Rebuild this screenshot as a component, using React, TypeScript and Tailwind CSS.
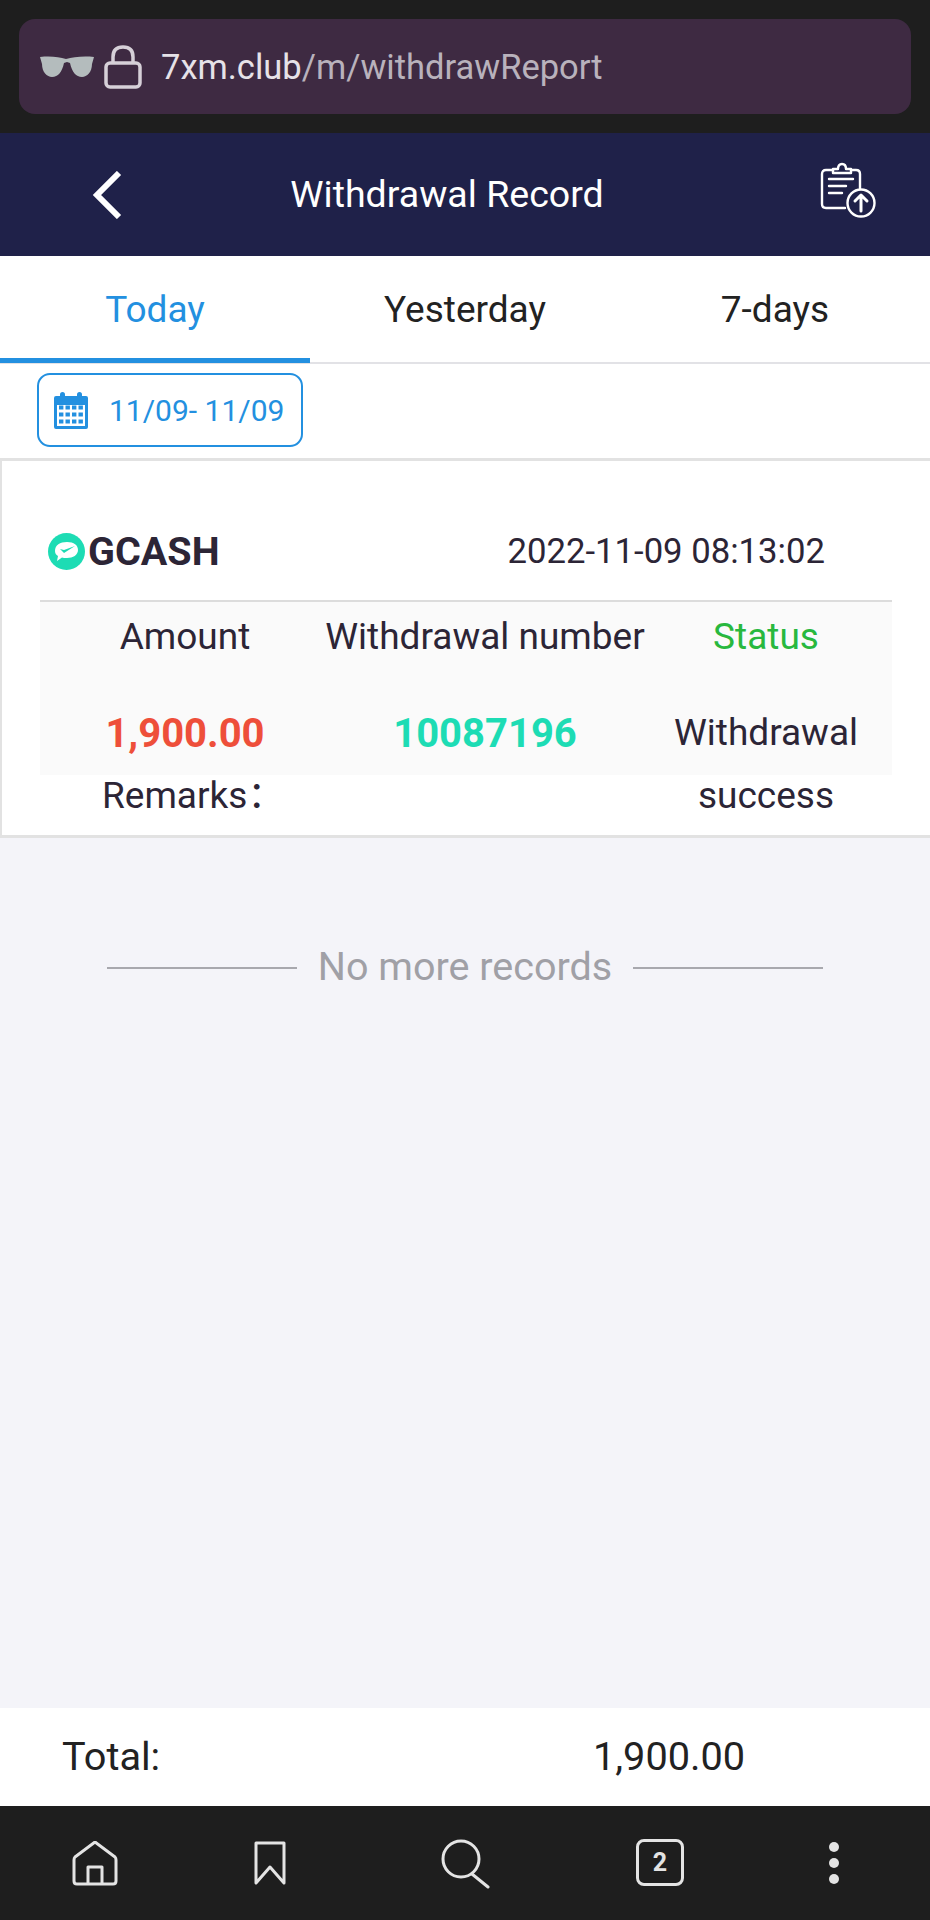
const TABS = ['Today', 'Yesterday', '7-days'];

function Glasses() {
  return (
    <svg width="56" height="24" viewBox="0 0 56 24" fill="#b4bcbd">
      <path d="M1 2 C12 1 20 2 27 4 C34 2 44 1 55 2 L53 9 C53 17 48 22 43 22 C37 22 33 17 31 8 L28 7 L25 8 C23 17 19 22 13 22 C8 22 3 17 3 9 Z" />
    </svg>
  );
}

function Lock() {
  return (
    <svg width="38" height="44" viewBox="0 0 38 44" fill="none" stroke="#d6d0d8" strokeWidth="3.5">
      <path d="M9 18 V12 C9 5 13 2 19 2 C25 2 29 5 29 12 V18" />
      <rect x="2" y="18" width="34" height="24" rx="4" />
    </svg>
  );
}

function ClipboardUpload() {
  return (
    <svg width="56" height="56" viewBox="0 0 56 56" fill="none" stroke="white" strokeWidth="2.4" strokeLinecap="round" strokeLinejoin="round">
      <path d="M13 8 H6 Q2 8 2 12 V42 Q2 46 6 46 H25" />
      <path d="M31 8 H36 Q40 8 40 12 V26" />
      <path d="M13 11 V7 H18 Q18 2 22 2 Q26 2 26 7 H31 V11 Z" />
      <path d="M9 17 H33 M9 24 H26 M9 31 H22" />
      <circle cx="41" cy="41" r="13.5" />
      <path d="M41 49 V34 M35 39 L41 33 L47 39" strokeWidth="3" />
    </svg>
  );
}

function CalendarIcon() {
  return (
    <svg width="36" height="38" viewBox="0 0 36 38" fill="#2390e0">
      <path d="M3 5 H8 V8 H12 V5 H24 V8 H28 V5 H33 Q35 5 35 7 V36 Q35 38 33 38 H3 Q1 38 1 36 V7 Q1 5 3 5 Z" />
      <rect x="7" y="1" width="5" height="9" rx="2.5" />
      <rect x="24" y="1" width="5" height="9" rx="2.5" />
      <rect x="4" y="14" width="28" height="21" fill="white" />
      {[16, 23, 30].map((y) =>
        [8, 14.5, 21, 27.5].map((x) => <rect key={`${x}-${y}`} x={x - 2} y={y - 1.5} width="4.4" height="4" fill="#2390e0" />),
      )}
    </svg>
  );
}

function GcashIcon() {
  return (
    <svg width="37" height="37" viewBox="0 0 37 37">
      <circle cx="18.5" cy="18.5" r="18.5" fill="#1ddcb4" />
      <path d="M7 18 C7 12 12 9 19 9 C26 9 30 12 30 17 C30 22 25 25 19 25 C17 25 15 25 14 24.5 L9 28 L10 23 C8 22 7 20 7 18 Z" fill="white" />
      <path d="M12 16 L16 20 L27 13 L16 17 Z" fill="#1ddcb4" />
    </svg>
  );
}

function BottomBar() {
  return (
    <div className="h-[114px] bg-[#1e1e1e] flex items-start pt-[35px] text-[#e4e4e4]">
      <div className="w-[190px] flex justify-center">
        <svg width="46" height="46" viewBox="0 0 46 46" fill="none" stroke="currentColor" strokeWidth="3" strokeLinejoin="round">
          <path d="M3 17 L23 2 L43 17 Q44 18 44 20 V41 Q44 44 41 44 H5 Q2 44 2 41 V20 Q2 18 3 17 Z" transform="translate(0 -1)" />
          <path d="M16 43 V26 H30 V43" />
        </svg>
      </div>
      <div className="w-[160px] flex justify-center">
        <svg width="32" height="44" viewBox="0 0 32 44" fill="none" stroke="currentColor" strokeWidth="3" strokeLinejoin="round">
          <path d="M2 2 H30 V42 L16 26 L2 42 Z" />
        </svg>
      </div>
      <div className="w-[232px] flex justify-center">
        <svg width="50" height="50" viewBox="0 0 50 50" fill="none" stroke="currentColor" strokeWidth="3" strokeLinecap="round" className="-mt-[2px]">
          <circle cx="20" cy="20" r="18" />
          <path d="M31 35 L47 48" />
        </svg>
      </div>
      <div className="w-[156px] flex justify-center">
        <div className="w-[48px] h-[47px] border-[3px] border-[#e4e4e4] rounded-[8px] flex items-center justify-center font-bold text-[25px] leading-none -mt-[2px]">2</div>
      </div>
      <div className="flex-1 flex flex-col items-center gap-[6px] pt-[1px]">
        <div className="w-[10px] h-[10px] rounded-full bg-[#e4e4e4]" />
        <div className="w-[10px] h-[10px] rounded-full bg-[#e4e4e4]" />
        <div className="w-[10px] h-[10px] rounded-full bg-[#e4e4e4]" />
      </div>
    </div>
  );
}

export default function App() {
  return (
    <div className="w-[930px] h-[1920px] flex flex-col bg-[#f4f4f9] font-['Roboto','Noto_Sans_CJK_SC',sans-serif] text-[#2c2536] overflow-hidden">
      <div className="h-[133px] bg-[#1e1e1e] px-[19px] pt-[19px] shrink-0">
        <div className="h-[95px] rounded-[16px] bg-[#3e2a42] flex items-center pl-[20px]">
          <Glasses />
          <div className="ml-[9px]"><Lock /></div>
          <p className="ml-[19px] pt-[2px] text-[34.5px] text-[#b9b2bc]">
            <span className="text-[#e6e2e8]">7xm.club</span>/m/withdrawReport
          </p>
        </div>
      </div>

      <div className="h-[123px] bg-[#1f2149] flex items-center text-white shrink-0">
        <div className="w-[122px] flex justify-end">
          <svg width="30" height="48" viewBox="0 0 30 48" fill="none" stroke="white" strokeWidth="6">
            <path d="M27 2 L5 24 L27 46" />
          </svg>
        </div>
        <p className="flex-1 text-center text-[37.5px] pr-[48px]">Withdrawal Record</p>
        <div className="w-[110px] -mt-[10px]"><ClipboardUpload /></div>
      </div>

      <div className="h-[108px] bg-white flex border-b-2 border-[#e2e2e6] shrink-0">
        {TABS.map((tab, i) => (
          <div
            key={tab}
            className={
              i === 0
                ? 'w-[310px] h-[107px] pt-[6px] flex items-center justify-center text-[37px] text-[#2390e0] border-b-[5px] border-[#2390e0]'
                : 'w-[310px] h-[106px] pt-[2px] flex items-center justify-center text-[37px] text-[#222]'
            }
          >
            {tab}
          </div>
        ))}
      </div>

      <div className="h-[94px] bg-white pl-[37px] pt-[9px] shrink-0">
        <div className="w-[266px] h-[74px] rounded-[13px] border-2 border-[#2390e0] flex items-center pl-[14px] gap-[20px] text-[#2390e0]">
          <CalendarIcon />
          <span className="text-[30px]">11/09- 11/09</span>
        </div>
      </div>

      <div className="h-[380px] bg-white border-y-[3px] border-l-2 border-[#e2e2e2] pl-[38px] pr-[38px] shrink-0">
        <div className="h-[139px] flex items-center pt-[42px]">
          <div className="ml-[8px]"><GcashIcon /></div>
          <span className="ml-[3px] text-[39.5px] font-bold">GCASH</span>
          <span className="ml-auto mr-[67px] text-[34.7px]">2022-11-09 08:13:02</span>
        </div>
        <div className="border-t-2 border-[#dcdcdc] bg-[#fafafa] h-[175px] grid grid-cols-[290px_310px_252px] grid-rows-[77px_98px] text-center text-[37px]">
          <div className="flex items-center justify-center pb-[8px]">Amount</div>
          <div className="flex items-center justify-center pb-[8px] whitespace-nowrap">Withdrawal number</div>
          <div className="flex items-center justify-center pb-[8px] text-[#28b83e]">Status</div>
          <div className="flex items-center justify-center pt-[12px] font-bold text-[40px] text-[#ee4f3a]">1,900.00</div>
          <div className="flex items-center justify-center pt-[12px] font-bold text-[40px] text-[#1ddcb4]">10087196</div>
          <div className="leading-[63px] pt-[22px]">Withdrawal success</div>
        </div>
        <p className="pl-[62px] pt-[1px] text-[37px] leading-[40px]">Remarks：</p>
      </div>

      <div className="flex-1 flex justify-center items-start pt-[104px] gap-[21px]">
        <div className="w-[190px] h-[2px] mt-[25px] bg-[#a8a8ae]" />
        <span className="text-[39.5px] leading-[50px] text-[#a0a0a6]">No more records</span>
        <div className="w-[190px] h-[2px] mt-[25px] bg-[#a8a8ae]" />
      </div>

      <div className="h-[98px] bg-white flex items-center text-[39.7px] text-[#222] shrink-0">
        <span className="ml-[62px] w-[531px]">Total:</span>
        <span>1,900.00</span>
      </div>

      <BottomBar />
    </div>
  );
}
